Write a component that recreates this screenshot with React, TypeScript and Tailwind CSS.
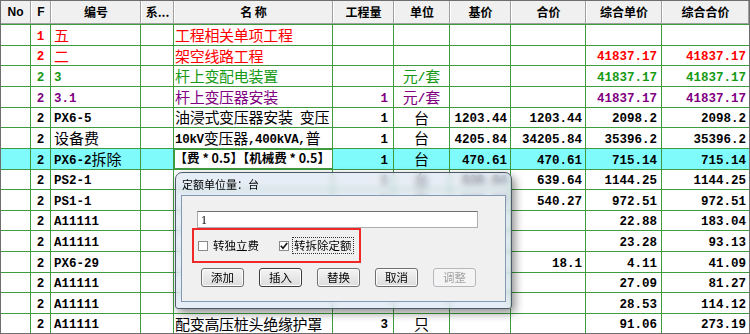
import { FC } from "react";

type Row = {
  f: string;
  code: string;
  name?: string;
  qty?: string;
  unit?: string;
  base?: string;
  total?: string;
  up?: string;
  ut?: string;
  color: string;
  h: string;
  sel?: boolean;
  edit?: boolean;
};

const RED = "text-[#ff0000]";
const GREEN = "text-[#169a16]";
const PURPLE = "text-[#800080]";
const BLACK = "text-black";

const rows: Row[] = [
  { f: "1", code: "五", name: "工程相关单项工程", color: RED, h: "h-[21px]" },
  { f: "2", code: "二", name: "架空线路工程", up: "41837.17", ut: "41837.17", color: RED, h: "h-[20px]" },
  { f: "2", code: "3", name: "杆上变配电装置", unit: "元/套", up: "41837.17", ut: "41837.17", color: GREEN, h: "h-[21px]" },
  { f: "2", code: "3.1", name: "杆上变压器安装", qty: "1", unit: "元/套", up: "41837.17", ut: "41837.17", color: PURPLE, h: "h-[21px]" },
  { f: "2", code: "PX6-5", name: "油浸式变压器安装 变压", qty: "1", unit: "台", base: "1203.44", total: "1203.44", up: "2098.2", ut: "2098.2", color: BLACK, h: "h-[20px]" },
  { f: "2", code: "设备费", name: "10kV变压器,400kVA,普", qty: "1", unit: "台", base: "4205.84", total: "34205.84", up: "35396.2", ut: "35396.2", color: BLACK, h: "h-[21px]" },
  { f: "2", code: "PX6-2拆除", name: "【费 * 0.5】【机械费 * 0.5】", qty: "1", unit: "台", base: "470.61", total: "470.61", up: "715.14", ut: "715.14", color: BLACK, h: "h-[21px]", sel: true, edit: true },
  // these two sit under the dialog's glass title bar
  { f: "2", code: "PS2-1", qty: "1", unit: "台", base: "639.64", total: "639.64", up: "1144.25", ut: "1144.25", color: BLACK, h: "h-[20px]" },
  { f: "2", code: "PS1-1", qty: "1", unit: "台", base: "540.27", total: "540.27", up: "972.51", ut: "972.51", color: BLACK, h: "h-[21px]" },
  { f: "2", code: "A11111", up: "22.88", ut: "183.04", color: BLACK, h: "h-[20px]" },
  { f: "2", code: "A11111", up: "23.28", ut: "93.13", color: BLACK, h: "h-[21px]" },
  { f: "2", code: "PX6-29", total: "18.1", up: "4.11", ut: "41.09", color: BLACK, h: "h-[21px]" },
  { f: "2", code: "A11111", up: "27.09", ut: "81.27", color: BLACK, h: "h-[20px]" },
  { f: "2", code: "A11111", up: "28.53", ut: "114.12", color: BLACK, h: "h-[21px]" },
  { f: "2", code: "A11111", name: "配变高压桩头绝缘护罩", qty: "3", unit: "只", up: "91.06", ut: "273.19", color: BLACK, h: "h-[19px]" },
];

// ascii goes half width (7.5px), CJK full width (15px), like SimSun
const Txt: FC<{ s?: string }> = ({ s }) => {
  if (!s) return null;
  return (
    <span className="whitespace-pre">
      {s
        .split(/([\x20-\x7e]+)/)
        .filter(Boolean)
        .map((p, i) =>
          /^[\x20-\x7e]+$/.test(p) ? (
            <span key={i} className="align-[1.5px] font-['Liberation_Mono'] text-[12.5px] font-bold">
              {p}
            </span>
          ) : (
            <span key={i} className="text-[15px]">
              {p}
            </span>
          )
        )}
    </span>
  );
};

const cell = "flex items-center overflow-hidden whitespace-nowrap leading-none pb-[2px] border-r border-[#3f9b3f] shrink-0";
const head =
  "flex items-center justify-center overflow-hidden whitespace-nowrap border-r border-[#a0a0a0] border-l border-l-white shrink-0 font-bold text-[12px] text-black";

const Win7Button: FC<{ label: string; focus?: boolean; disabled?: boolean }> = ({ label, focus, disabled }) => (
  <div
    className={
      focus
        ? "w-[43px] h-[19px] flex items-center justify-center rounded-[3px] border border-[#3c3c3c] bg-gradient-to-b from-[#f4f4f4] to-[#dcdcdc] text-[11.5px] text-black shadow-[inset_0_0_0_1px_#ffffff]"
        : disabled
        ? "w-[43px] h-[19px] flex items-center justify-center rounded-[3px] border border-[#b5b9bd] bg-[#f4f4f4] text-[11.5px] text-[#a3a3a3]"
        : "w-[43px] h-[19px] flex items-center justify-center rounded-[3px] border border-[#707070] bg-gradient-to-b from-[#f4f4f4] to-[#dcdcdc] text-[11.5px] text-black shadow-[inset_0_0_0_1px_#fbfbfb]"
    }
  >
    {label}
  </div>
);

const App: FC = () => {
  return (
    <div className="relative w-[750px] h-[334px] overflow-hidden bg-white font-['Noto_Sans_CJK_SC',sans-serif] leading-none">
      {/* grid */}
      <div className="w-[750px] h-[334px] border border-[#6e6e6e] flex flex-col overflow-hidden">
        {/* header */}
        <div className="flex h-[23px] shrink-0 bg-[#f0f0f0] border-b border-[#a0a0a0]">
          <div className={`${head} w-[30px] border-l-0 font-['Liberation_Sans'] text-[11px]`}>No</div>
          <div className={`${head} w-[20px] font-['Liberation_Sans'] text-[11px]`}>F</div>
          <div className={`${head} w-[90px]`}>编号</div>
          <div className={`${head} w-[33px]`}>系...</div>
          <div className={`${head} w-[159px]`}>名&nbsp;称</div>
          <div className={`${head} w-[61px]`}>工程量</div>
          <div className={`${head} w-[56px]`}>单位</div>
          <div className={`${head} w-[61px]`}>基价</div>
          <div className={`${head} w-[75px]`}>合价</div>
          <div className={`${head} w-[76px]`}>综合单价</div>
          <div className={`${head} w-[87px]`}>综合合价</div>
        </div>
        <div className="h-px shrink-0 bg-[#3f9b3f]" />

        {/* body */}
        {rows.map((r, i) => (
          <div
            key={i}
            className={`flex shrink-0 ${r.h} ${i === rows.length - 1 ? "" : "border-b border-[#3f9b3f]"} ${r.sel ? "bg-[#80fbfc]" : ""} ${r.color}`}
          >
            <div className={`${cell} w-[30px]`} />
            <div className={`${cell} w-[20px] justify-center`}>
              <Txt s={r.f} />
            </div>
            <div className={`${cell} w-[90px] pl-[3px]`}>
              <Txt s={r.code} />
            </div>
            <div className={`${cell} w-[33px]`} />
            {r.edit ? (
              <div className={`${cell} w-[159px] bg-white justify-end pr-[2px] border border-[#1a1a1a]`}>
                <span className="text-[12.5px] font-bold leading-none">{r.name}</span>
              </div>
            ) : (
              <div className={`${cell} w-[159px] pl-[1px] tracking-[-0.3px]`}>
                <Txt s={r.name} />
              </div>
            )}
            <div className={`${cell} w-[61px] justify-end pr-[5px]`}>
              <Txt s={r.qty} />
            </div>
            <div className={`${cell} w-[56px] justify-center`}>
              <Txt s={r.unit} />
            </div>
            <div className={`${cell} w-[61px] justify-end pr-[3px]`}>
              <Txt s={r.base} />
            </div>
            <div className={`${cell} w-[75px] justify-end pr-[3px]`}>
              <Txt s={r.total} />
            </div>
            <div className={`${cell} w-[76px] justify-end pr-[4px]`}>
              <Txt s={r.up} />
            </div>
            <div className={`${cell} w-[87px] justify-end pr-[3px] border-r-0`}>
              <Txt s={r.ut} />
            </div>
          </div>
        ))}
      </div>

      {/* dialog window */}
      <div className="absolute left-[175px] top-[172px] w-[337px] h-[137px] flex flex-col px-[5px] pb-[6px] rounded-t-[7px] rounded-b-[3px] border border-[#4d5a68] bg-[#d3dfee]/55 backdrop-blur-[3px] shadow-[3px_4px_10px_rgba(0,0,0,0.45)]">
        <div className="h-[22px] shrink-0 flex items-center pl-[1px] text-[11px] text-black">定额单位量：台</div>

        <div className="flex-1 flex flex-col border border-[#8398b2] bg-[#f0f0f0] pl-[15px] pt-[15px]">
          {/* input */}
          <div className="w-[281px] h-[17px] shrink-0 flex items-center pl-[3px] bg-white border border-[#abadb3] border-t-[#707070] font-['Liberation_Serif'] text-[12px] text-black">
            1
          </div>

          {/* red highlight */}
          <div className="ml-[-5px] w-[169px] h-[35px] shrink-0 flex items-center pl-[4px] border-2 border-[#f02828] text-[11.5px] text-black">
            <div className="w-[10px] h-[10px] shrink-0 border border-[#8a8a8a] bg-white" />
            <span className="ml-[5px]">转独立费</span>
            <div className="ml-[20px] w-[10px] h-[10px] shrink-0 border border-[#8a8a8a] bg-white flex items-center justify-center">
              <svg width="8" height="8" viewBox="0 0 8 8">
                <polyline points="0.8,3.8 3,6.3 7.2,1" fill="none" stroke="#111" strokeWidth="1.6" />
              </svg>
            </div>
            <span className="ml-[3px] px-[1px] py-[2px] border border-dotted border-[#333]">转拆除定额</span>
          </div>

          {/* buttons */}
          <div className="flex gap-[15px] mt-[5px] ml-[4px]">
            <Win7Button label="添加" />
            <Win7Button label="插入" focus />
            <Win7Button label="替换" />
            <Win7Button label="取消" />
            <Win7Button label="调整" disabled />
          </div>
        </div>
      </div>
    </div>
  );
};

export default App;
